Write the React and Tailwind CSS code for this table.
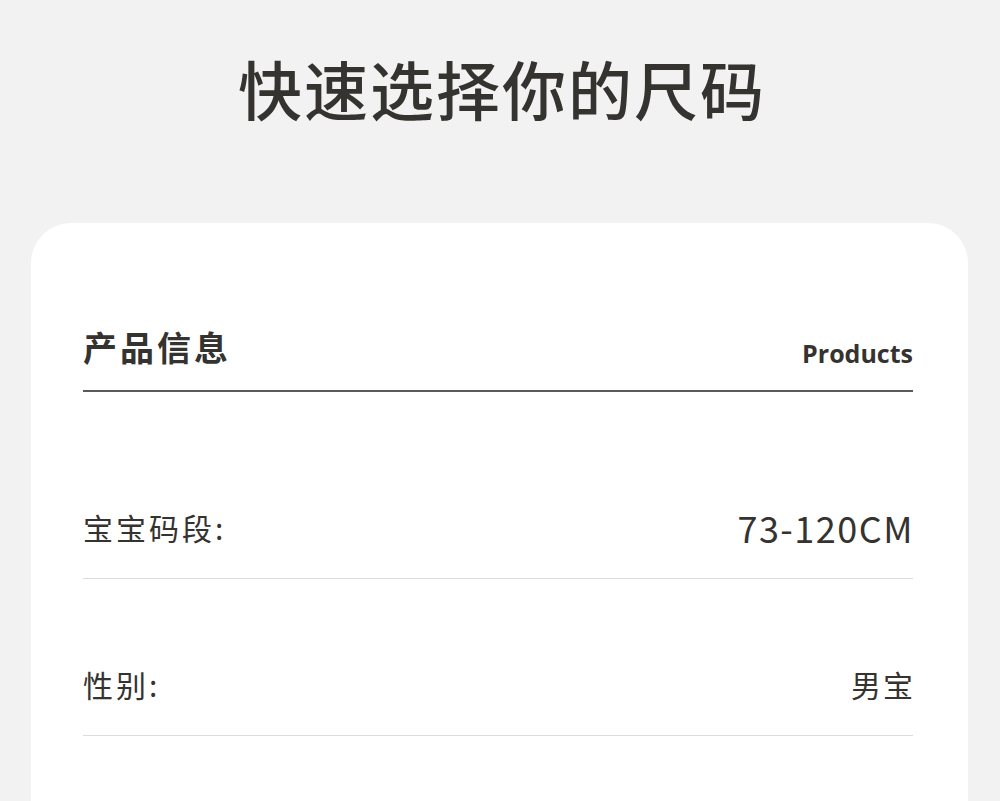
export default function App() {
  const cjk = { fontFamily: '"Noto Sans CJK SC", "Noto Sans", sans-serif' };
  return (
    <div className="w-[1000px] h-[801px] overflow-hidden bg-[#f2f2f2] text-[#35332f]" style={cjk}>
      <div className="h-[223px] pt-[55px] pl-[4px] flex justify-center">
        <h1 className="text-[64px] leading-none tracking-[2px] font-medium">快速选择你的尺码</h1>
      </div>
      <div className="ml-[31px] mr-[32px] h-[600px] bg-white rounded-t-[40px] pl-[52px] pr-[55px] pt-[104px]">
        <div className="flex items-end justify-between border-b-2 border-[#5a5a5a] h-[65px] pb-[26px]">
          <div className="text-[34px] leading-none font-bold tracking-[3px] -mt-[2px]">产品信息</div>
          <div className="text-[25px] leading-none font-bold -mb-[2px]" style={{ fontFamily: '"Open Sans", sans-serif' }}>Products</div>
        </div>
        <div className="flex items-center justify-between h-[187px] pt-[84px] border-b border-[#dcdcdc]">
          <div className="text-[30px] leading-none tracking-[3px]">宝宝码段:</div>
          <div className="text-[36px] leading-none tracking-[1.5px] -mr-[1px]">73-120CM</div>
        </div>
        <div className="flex items-center justify-between h-[157px] pt-[54px] border-b border-[#dcdcdc]">
          <div className="text-[30px] leading-none tracking-[3px]">性别:</div>
          <div className="text-[30px] leading-none tracking-[2px] -mr-[2px]">男宝</div>
        </div>
      </div>
    </div>
  );
}
